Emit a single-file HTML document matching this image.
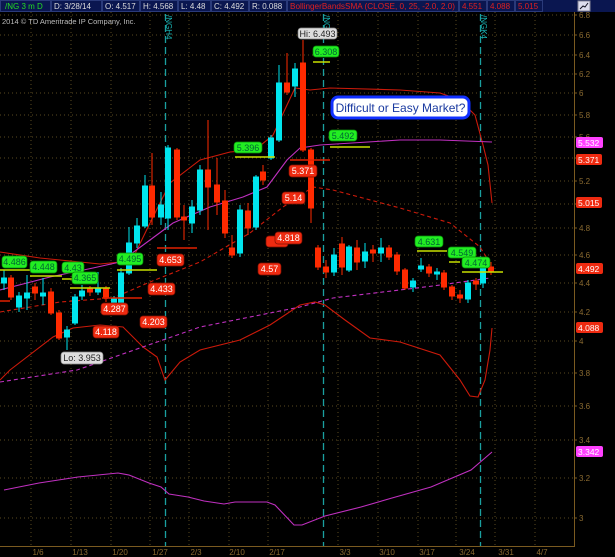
<!DOCTYPE html>
<html><head><meta charset="utf-8"><style>
body{margin:0;background:#000;width:615px;height:557px;overflow:hidden;font-family:"Liberation Sans",sans-serif}
svg{position:absolute;left:0;top:0}
</style></head><body>
<svg width="615" height="557" viewBox="0 0 615 557" font-family="Liberation Sans, sans-serif">
<rect width="615" height="557" fill="#000"/>
<!-- header -->
<rect x="0" y="0" width="615" height="12" fill="#0a1650"/>
<g fill="none" stroke="#2a3a7a" stroke-width="1">
<rect x="0.5" y="0.5" width="50" height="11"/><rect x="51.5" y="0.5" width="50" height="11"/>
<rect x="102.5" y="0.5" width="37" height="11"/><rect x="140.5" y="0.5" width="37" height="11"/>
<rect x="178.5" y="0.5" width="32" height="11"/><rect x="211.5" y="0.5" width="37" height="11"/>
<rect x="249.5" y="0.5" width="37" height="11"/><rect x="287.5" y="0.5" width="171" height="11"/>
<rect x="459.5" y="0.5" width="27" height="11"/><rect x="487.5" y="0.5" width="27" height="11"/>
<rect x="515.5" y="0.5" width="27" height="11"/>
</g>
<g font-size="8" fill="#ddd">
<text x="5" y="9" fill="#22dd22">/NG 3 m D</text>
<text x="54" y="9">D: 3/28/14</text>
<text x="105" y="9">O: 4.517</text>
<text x="143" y="9">H: 4.568</text>
<text x="181" y="9">L: 4.48</text>
<text x="214" y="9">C: 4.492</text>
<text x="252" y="9">R: 0.088</text>
<text x="290" y="9" fill="#e02020" textLength="165" lengthAdjust="spacingAndGlyphs">BollingerBandsSMA (CLOSE, 0, 25, -2.0, 2.0)</text>
<text x="462" y="9" fill="#e02020">4.551</text>
<text x="490" y="9" fill="#e02020">4.088</text>
<text x="518" y="9" fill="#e02020">5.015</text>
</g>
<rect x="578" y="1" width="12" height="10" fill="#dde" stroke="#889"/>
<path d="M580,9 L583,6 L585,7 L588,3" stroke="#112" fill="none"/>
<!-- grid -->
<g stroke="#5a4a20" stroke-width="1" stroke-dasharray="1,3">
<path d="M0,15H574M0,35H574M0,55H574M0,74H574M0,93H574M0,115H574M0,137H574M0,158H574M0,181H574M0,204H574M0,228H574M0,255H574M0,283H574M0,312H574M0,341H574M0,373H574M0,406H574M0,440H574M0,478H574M0,518H574"/>
<path d="M31,12V546M71,12V546M111,12V546M150,12V546M189,12V546M229,12V546M268,12V546M338,12V546M378,12V546M418,12V546M456,12V546M495,12V546M535,12V546"/>
</g>
<path d="M574.5,12V546.5H0" stroke="#7a5a20" fill="none"/>
<g stroke="#7a5a20"><path d="M574,15h3M574,35h3M574,55h3M574,74h3M574,93h3M574,115h3M574,137h3M574,158h3M574,181h3M574,204h3M574,228h3M574,255h3M574,283h3M574,312h3M574,341h3M574,373h3M574,406h3M574,440h3M574,478h3M574,518h3"/></g>
<g font-size="8" fill="#8a6a30">
<text x="579" y="18">6.8</text><text x="579" y="38">6.6</text><text x="579" y="58">6.4</text><text x="579" y="77">6.2</text><text x="579" y="96">6</text><text x="579" y="118">5.8</text><text x="579" y="140">5.6</text><text x="579" y="161">5.4</text><text x="579" y="184">5.2</text><text x="579" y="207">5</text><text x="579" y="231">4.8</text><text x="579" y="258">4.6</text><text x="579" y="286">4.4</text><text x="579" y="315">4.2</text><text x="579" y="344">4</text><text x="579" y="376">3.8</text><text x="579" y="409">3.6</text><text x="579" y="443">3.4</text><text x="579" y="481">3.2</text><text x="579" y="521">3</text>
</g>
<g font-size="8" fill="#8a6a30" text-anchor="middle">
<text x="38" y="555">1/6</text><text x="80" y="555">1/13</text><text x="120" y="555">1/20</text><text x="160" y="555">1/27</text><text x="196" y="555">2/3</text><text x="237" y="555">2/10</text><text x="277" y="555">2/17</text><text x="345" y="555">3/3</text><text x="387" y="555">3/10</text><text x="427" y="555">3/17</text><text x="467" y="555">3/24</text><text x="506" y="555">3/31</text><text x="542" y="555">4/7</text>
</g>
<text x="2" y="24" font-size="7.5" fill="#bbb">2014 © TD Ameritrade IP Company, Inc.</text>
<!-- expiry lines -->
<g stroke="#1aa0a0" stroke-width="1.3" stroke-dasharray="7,4"><path d="M165.5,14V546M323.5,14V546M480.5,14V546"/></g>
<g font-size="8" fill="#1ab8b8">
<text transform="translate(166,15) rotate(90)">/NGH4</text>
<text transform="translate(324,15) rotate(90)">/NGJ4</text>
<text transform="translate(481,15) rotate(90)">/NGK4</text>
</g>
<!-- indicator lines -->
<g fill="none" stroke-width="1.1">
<path stroke="#cc1a0a" d="M0,252 L40,258 L100,264 L120,262 L133,258 L150,223 L170,183 L200,160 L230,152 L255,150 L273,135 L287,105 L295,88 L310,90 L330,88 L400,90 L440,93 L460,100 L475,115 L483,145 L488,165 L492,203"/>
<path stroke="#cc1a0a" d="M0,380 L10,370 L53,337 L73,328 L100,325 L123,327 L143,347 L157,357 L165,380 L180,362 L200,350 L240,340 L270,325 L300,305 L315,302 L325,305 L345,320 L370,338 L400,342 L440,355 L460,380 L470,396 L478,397 L485,380 L490,350 L492,328"/>
<path stroke="#cc1a0a" stroke-dasharray="4,3" d="M0,312 L60,302 L113,298 L150,282 L200,262 L250,233 L283,207 L313,187 L333,190 L400,208 L450,223 L480,247 L490,263"/>
<path stroke="#c030c0" d="M0,290 L50,277 L93,268 L120,262 L150,240 L173,223 L210,207 L243,197 L267,187 L287,160 L300,148 L320,145 L400,140 L440,140 L492,142"/>
<path stroke="#c030c0" stroke-dasharray="4,3" d="M0,382 L77,370 L200,327 L300,307 L333,298 L433,286 L490,278"/>
<path stroke="#c030c0" d="M4,490 L39,483 L78,477 L118,473 L129,475 L149,483 L161,487 L169,494 L188,497 L204,501 L224,504 L235,502 L267,502 L275,505 L294,525 L302,525 L325,516 L361,507 L392,498 L431,487 L471,470 L492,452"/>
</g>
<!-- candles -->
<g stroke-width="1">
<g stroke="#00e5ee" fill="#00e5ee">
<path d="M4,270V290M19,292V312M27,275V310M43,278V305M67,326V350M75,294V325M82,285V300M98,272V295M114,296V305M121,268V306M129,227V275M137,218V248M145,175V228M161,192V225M168,145V230M192,200V233M200,165V215M240,205V257M256,175V230M271,135V160M279,65V142M295,63V97M334,248V276M349,245V272M365,243V268M381,238V262M413,278V292M421,258V272M437,268V280M468,280V303M483,263V288"/>
<rect x="1.5" y="278" width="5" height="5"/><rect x="16.5" y="296" width="5" height="11"/><rect x="24.5" y="293" width="5" height="5"/><rect x="40.5" y="293" width="5" height="3"/><rect x="64.5" y="330" width="5" height="7"/><rect x="72.5" y="297" width="5" height="26"/><rect x="79.5" y="291" width="5" height="5"/><rect x="95.5" y="288" width="5" height="4"/><rect x="111.5" y="299" width="5" height="4"/><rect x="118.5" y="273" width="5" height="32"/><rect x="126.5" y="243" width="5" height="30"/><rect x="134.5" y="226" width="5" height="17"/><rect x="142.5" y="186" width="5" height="40"/><rect x="158.5" y="205" width="5" height="12"/><rect x="165.5" y="148" width="5" height="70"/><rect x="189.5" y="207" width="5" height="16"/><rect x="197.5" y="170" width="5" height="40"/><rect x="237.5" y="210" width="5" height="43"/><rect x="253.5" y="177" width="5" height="50"/><rect x="268.5" y="138" width="5" height="20"/><rect x="276.5" y="83" width="5" height="57"/><rect x="292.5" y="69" width="5" height="17"/><rect x="331.5" y="255" width="5" height="17"/><rect x="346.5" y="247" width="5" height="23"/><rect x="362.5" y="252" width="5" height="9"/><rect x="378.5" y="248" width="5" height="5"/><rect x="410.5" y="281" width="5" height="6"/><rect x="418.5" y="266" width="5" height="3"/><rect x="434.5" y="272" width="5" height="2"/><rect x="465.5" y="283" width="5" height="16"/><rect x="480.5" y="268" width="5" height="15"/>
</g>
<g stroke="#ff2a00" fill="#ff2a00">
<path d="M11,275V300M35,283V300M51,288V315M59,310V340M90,286V296M106,286V302M152,153V225M177,148V220M184,205V240M208,120V230M217,158V215M225,190V238M232,235V258M248,203V235M263,165V185M287,53V95M303,40V152M311,148V223M318,245V270M326,260V278M342,237V275M357,240V270M373,245V262M389,245V260M397,252V275M405,268V290M429,264V277M444,270V290M452,285V300M460,290V303M476,278V290M491,262V275"/>
<rect x="8.5" y="278" width="5" height="19"/><rect x="32.5" y="287" width="5" height="6"/><rect x="48.5" y="292" width="5" height="21"/><rect x="56.5" y="313" width="5" height="25"/><rect x="87.5" y="289" width="5" height="3"/><rect x="103.5" y="288" width="5" height="10"/><rect x="149.5" y="186" width="5" height="31"/><rect x="174.5" y="150" width="5" height="67"/><rect x="181.5" y="217" width="5" height="3"/><rect x="205.5" y="170" width="5" height="17"/><rect x="214.5" y="185" width="5" height="17"/><rect x="222.5" y="201" width="5" height="32"/><rect x="229.5" y="248" width="5" height="7"/><rect x="245.5" y="211" width="5" height="17"/><rect x="260.5" y="172" width="5" height="8"/><rect x="284.5" y="83" width="5" height="9"/><rect x="300.5" y="63" width="5" height="87"/><rect x="308.5" y="150" width="5" height="58"/><rect x="315.5" y="248" width="5" height="19"/><rect x="323.5" y="267" width="5" height="5"/><rect x="339.5" y="244" width="5" height="23"/><rect x="354.5" y="248" width="5" height="14"/><rect x="370.5" y="250" width="5" height="3"/><rect x="386.5" y="248" width="5" height="9"/><rect x="394.5" y="255" width="5" height="16"/><rect x="402.5" y="270" width="5" height="18"/><rect x="426.5" y="267" width="5" height="6"/><rect x="441.5" y="273" width="5" height="14"/><rect x="449.5" y="287" width="5" height="9"/><rect x="457.5" y="295" width="5" height="3"/><rect x="473.5" y="281" width="5" height="3"/><rect x="488.5" y="267" width="5" height="4"/>
</g>
</g>
<!-- level lines -->
<g stroke="#c8e000" stroke-width="1.5">
<path d="M0,270H30M30,276H62M62,279H75M70,288H110M117,270H157M235,157H275M313,62H330M330,147H370M417,251H447M449,262H460M462,272H503"/>
</g>
<g stroke="#e02000" stroke-width="1.5">
<path d="M157,248H197M102,298H140M290,160H330M0,301H10M103,298H142"/>
</g>
<!-- labels -->
<g font-size="9" text-anchor="middle">
<g fill="#22ee22" stroke="#0a8a0a" stroke-width="0.7">
<rect x="2" y="256" width="25" height="12" rx="3"/><rect x="30" y="261" width="27" height="12" rx="3"/><rect x="62" y="262" width="22" height="11" rx="3"/><rect x="72" y="272" width="26" height="12" rx="3"/><rect x="117" y="253" width="26" height="12" rx="3"/><rect x="234" y="142" width="28" height="11" rx="3"/><rect x="313" y="46" width="26" height="11" rx="3"/><rect x="329" y="130" width="28" height="11" rx="3"/><rect x="415" y="236" width="28" height="11" rx="3"/><rect x="448" y="247" width="28" height="11" rx="3"/><rect x="462" y="257" width="28" height="11" rx="3"/>
</g>
<g fill="#063">
<text x="14.5" y="265">4.486</text><text x="43.5" y="270">4.448</text><text x="73" y="271">4.43</text><text x="85" y="281">4.365</text><text x="130" y="262">4.495</text><text x="248" y="151">5.396</text><text x="326" y="55">6.308</text><text x="343" y="139">5.492</text><text x="429" y="245">4.631</text><text x="462" y="256">4.549</text><text x="476" y="266">4.474</text>
</g>
<g fill="#ee2a10" stroke="#801000" stroke-width="0.7">
<rect x="157" y="254" width="27" height="12" rx="3"/><rect x="148" y="283" width="27" height="12" rx="3"/><rect x="101" y="303" width="27" height="12" rx="3"/><rect x="140" y="316" width="27" height="12" rx="3"/><rect x="93" y="326" width="26" height="12" rx="3"/><rect x="289" y="165" width="28" height="12" rx="3"/><rect x="282" y="192" width="23" height="12" rx="3"/><rect x="266" y="236" width="22" height="11" rx="3"/><rect x="275" y="232" width="27" height="12" rx="3"/><rect x="258" y="263" width="23" height="12" rx="3"/>
</g>
<g fill="#fff">
<text x="170.5" y="263">4.653</text><text x="161.5" y="292">4.433</text><text x="114.5" y="312">4.287</text><text x="153.5" y="325">4.203</text><text x="106" y="335">4.118</text><text x="303" y="174">5.371</text><text x="293.5" y="201">5.14</text><text x="288.5" y="241">4.818</text><text x="269.5" y="272">4.57</text>
</g>
<rect x="298" y="28" width="39" height="11" rx="3" fill="#ddd" stroke="#888" stroke-width="0.7"/>
<text x="317.5" y="37" fill="#222">Hi: 6.493</text>
<rect x="61" y="352" width="42" height="12" rx="3" fill="#ddd" stroke="#888" stroke-width="0.7"/>
<text x="82" y="361" fill="#222">Lo: 3.953</text>
</g>
<!-- right axis labels -->
<g font-size="8.5" fill="#fff">
<rect x="576" y="137" width="27" height="11" rx="2" fill="#ff40ff"/><text x="578" y="146">5.532</text>
<rect x="576" y="154" width="26" height="11" rx="2" fill="#ee2a10"/><text x="578" y="163">5.371</text>
<rect x="576" y="197" width="26" height="11" rx="2" fill="#ee2a10"/><text x="578" y="206">5.015</text>
<rect x="576" y="263" width="27" height="11" rx="2" fill="#ee2a10"/><text x="578" y="272">4.492</text>
<rect x="576" y="322" width="27" height="11" rx="2" fill="#ee2a10"/><text x="578" y="331">4.088</text>
<rect x="576" y="446" width="27" height="11" rx="2" fill="#ff40ff"/><text x="578" y="455">3.342</text>
</g>
<!-- note -->
<rect x="332" y="97" width="137" height="21" rx="6" fill="#fff" stroke="#1030ff" stroke-width="3"/>
<text x="400.5" y="112" font-size="12" fill="#1a3aa0" text-anchor="middle">Difficult or Easy Market?</text>
</svg>
</body></html>
